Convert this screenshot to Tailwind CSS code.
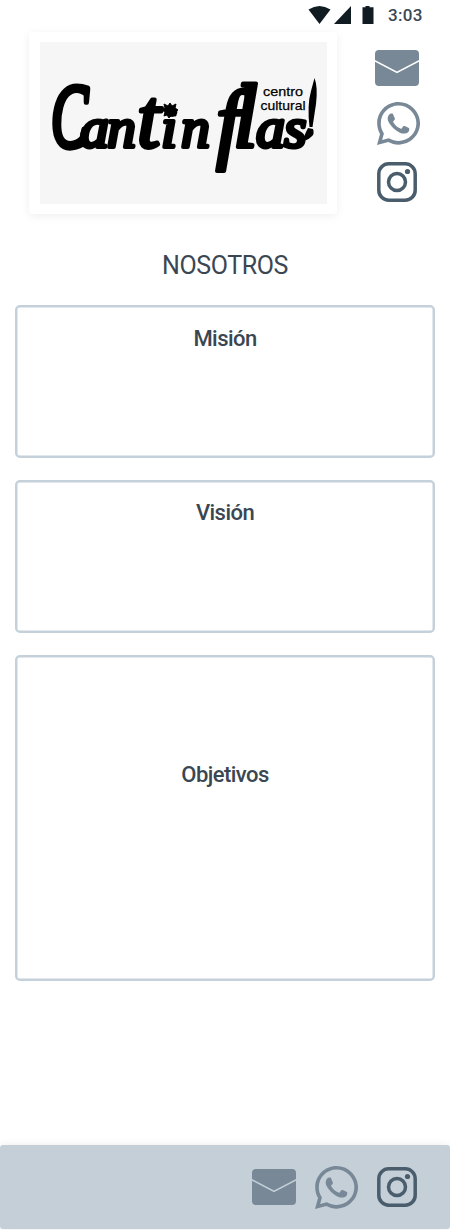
<!DOCTYPE html>
<html lang="es">
<head>
<meta charset="utf-8">
<meta name="viewport" content="width=device-width, initial-scale=1">
<title>Cantinflas - Nosotros</title>
<script src="https://cdn.jsdelivr.net/npm/@tailwindcss/browser@4"></script>
</head>
<body class="bg-white font-['Roboto',sans-serif] text-[#3a4753]">
<svg class="hidden">
  <symbol id="mail" viewBox="0 0 44 36">
    <path d="M4 0H40Q44 0 44 4V10L22 21.500L0 10V4Q0 0 4 0Z"/>
    <path d="M0 11.700L22 23.200L44 11.700V32Q44 36 40 36H4Q0 36 0 32Z"/>
  </symbol>
  <symbol id="whatsapp" viewBox="0 0 448 448">
    <path d="M380.900 65.100C339 23.100 283.200 0 223.900 0 101.500 0 1.900 99.600 1.900 222c0 39.100 10.200 77.300 29.600 111L0 448l117.700-30.900c32.400 17.700 68.900 27 106.100 27h.1c122.300 0 224.100-99.600 224.100-222 0-59.300-25.200-115-67.100-157zM223.900 406.700c-33.200 0-65.700-8.900-94-25.700l-6.700-4-69.800 18.300L72 327.200l-4.400-7c-18.500-29.400-28.200-63.300-28.200-98.200 0-101.700 82.800-184.500 184.600-184.500 49.300 0 95.600 19.200 130.400 54.100 34.800 34.900 56.200 81.200 56.100 130.500 0 101.800-84.900 184.600-186.600 184.600z"/>
    <path d="M325.100 268.500c-5.500-2.800-32.800-16.200-37.900-18-5.100-1.900-8.800-2.800-12.500 2.800-3.700 5.600-14.300 18-17.600 21.800-3.200 3.700-6.500 4.200-12 1.400-32.600-16.300-54-29.100-75.500-66-5.700-9.800 5.700-9.100 16.300-30.300 1.800-3.700.9-6.900-.5-9.700-1.400-2.800-12.500-30.100-17.100-41.200-4.500-10.800-9.100-9.300-12.500-9.500-3.200-.2-6.900-.2-10.600-.2-3.700 0-9.700 1.400-14.800 6.900-5.100 5.600-19.400 19-19.400 46.300 0 27.300 19.900 53.700 22.600 57.400 2.800 3.700 39.100 59.700 94.800 83.800 35.200 15.200 49 16.500 66.600 13.900 10.700-1.600 32.800-13.400 37.400-26.400 4.600-13 4.600-24.100 3.200-26.400-1.300-2.500-5-3.900-10.500-6.600z"/>
  </symbol>
  <symbol id="instagram" viewBox="0 0 40 40">
    <rect x="1.800" y="1.800" width="36.400" height="36.400" rx="10" fill="none" stroke="currentColor" stroke-width="3.500"/>
    <path d="M20 11.500A8.500 8.500 0 1 1 20 28.500A8.500 8.500 0 1 1 20 11.500Z" fill="none" stroke="currentColor" stroke-width="3.500"/>
    <circle cx="30.500" cy="9.500" r="2.600"/>
  </symbol>
</svg>
<div class="flex h-[1230px] w-[450px] flex-col overflow-hidden">
  <div class="flex h-8 shrink-0 items-start justify-end pr-[27px] pt-[5px]">
    <svg class="h-[20px] w-[70px]" viewBox="0 0 70 20" fill="#101b22">
      <path d="M.500 4.500Q11.500-2.500 22.500 4.500L11.500 19Z"/>
      <path d="M43 1V19H26Z"/>
      <path d="M54.500 2.300H57.500V1H61.500V2.300H65.500V19H54.500Z"/>
    </svg>
    <span class="ml-[10px] w-[35px] whitespace-nowrap text-[17px] leading-[21px] font-medium tracking-[0.3px]">3:03</span>
  </div>
  <header class="flex h-[182px] shrink-0 pl-[29px]">
    <div class="w-[308px] rounded-[4px] bg-white pt-[10px] pb-[10px] pl-[11px] pr-[10px] shadow-[0_2px_10px_rgba(0,0,0,0.065)]">
      <svg class="h-[162px] w-[287px] bg-[#f6f6f6]" viewBox="40 42 287 162">
        <g font-family="Liberation Serif" font-style="italic" stroke="#000" stroke-linejoin="round" stroke-linecap="round">
          <text x="51" y="147" font-size="92" stroke-width="6" textLength="37" lengthAdjust="spacingAndGlyphs">C</text>
          <text y="147" font-size="58" stroke-width="4"><tspan x="80">a</tspan><tspan x="107">n</tspan><tspan x="137" font-size="84">t</tspan><tspan x="161">i</tspan><tspan x="181">n</tspan></text>
          <text x="216" y="152" font-size="88" stroke-width="4">f</text>
          <text y="147" font-size="58" stroke-width="4"><tspan x="233" font-size="90">l</tspan><tspan x="256">a</tspan><tspan x="284">s</tspan></text>
        </g>
        <path d="M170 103L172 106L176 104L175 108L178 110L175 112L176 116L172 115L169 118L167 115L164 116L165 112L162 110L165 108L164 104L168 106Z" stroke="#000" stroke-width="1" stroke-linejoin="round"/>
        <path d="M314.500 78Q318 87 316 104L312.500 127H309.500Q307 105 311 91Z"/>
        <path d="M308 128L313 129Q315 134 311 137Q307 141 301 141Q305 136 306 132Z"/>
        <g font-family="Liberation Sans" font-size="13.500" stroke="#000" stroke-width=".250">
          <text x="263" y="95.500" textLength="40" lengthAdjust="spacingAndGlyphs">centro</text>
          <text x="260.500" y="109.500" textLength="45" lengthAdjust="spacingAndGlyphs">cultural</text>
        </g>
      </svg>
    </div>
    <div class="flex w-[44px] flex-col items-center ml-[38px] pt-[18px] text-[#788896]">
      <svg class="h-[36px] w-[44px] shrink-0" fill="currentColor"><use href="#mail"/></svg>
      <svg class="mt-[16px] ml-[2px] h-[43px] w-[43px] shrink-0" fill="currentColor"><use href="#whatsapp"/></svg>
      <svg class="mt-[17px] h-[40px] w-[40px] shrink-0 text-[#4a5d6c]" fill="currentColor"><use href="#instagram"/></svg>
    </div>
  </header>
  <h1 class="mt-[35px] h-[34px] shrink-0 text-center text-[25px] leading-[34px] tracking-[-0.4px]">NOSOTROS</h1>
  <main class="mt-[22px] flex shrink-0 flex-col gap-[22px] px-[15px] text-center text-[22px] leading-[30px] font-medium tracking-[-0.55px]">
    <section class="h-[153px] rounded-[5px] border-2 border-[#c4d0da] pt-[17px] shadow-[inset_0_0_0_0.5px_#c4d0da]">Misión</section>
    <section class="h-[153px] rounded-[5px] border-2 border-[#c4d0da] pt-[16px] shadow-[inset_0_0_0_0.5px_#c4d0da]">Visión</section>
    <section class="h-[326px] rounded-[5px] border-2 border-[#c4d0da] pt-[103px] shadow-[inset_0_0_0_0.5px_#c4d0da]">Objetivos</section>
  </main>
  <footer class="mt-auto mb-px flex h-[84px] shrink-0 items-center rounded-[3px] bg-[#c4cfd8] pl-[252px] text-[#788896] shadow-[0_0_8px_rgba(0,0,0,0.08)]">
    <svg class="h-[36px] w-[44px]" fill="currentColor"><use href="#mail"/></svg>
    <svg class="ml-[19px] mt-[1px] h-[43px] w-[43px]" fill="currentColor"><use href="#whatsapp"/></svg>
    <svg class="ml-[19px] h-[40px] w-[40px] text-[#4a5d6c]" fill="currentColor"><use href="#instagram"/></svg>
  </footer>
</div>
</body>
</html>
